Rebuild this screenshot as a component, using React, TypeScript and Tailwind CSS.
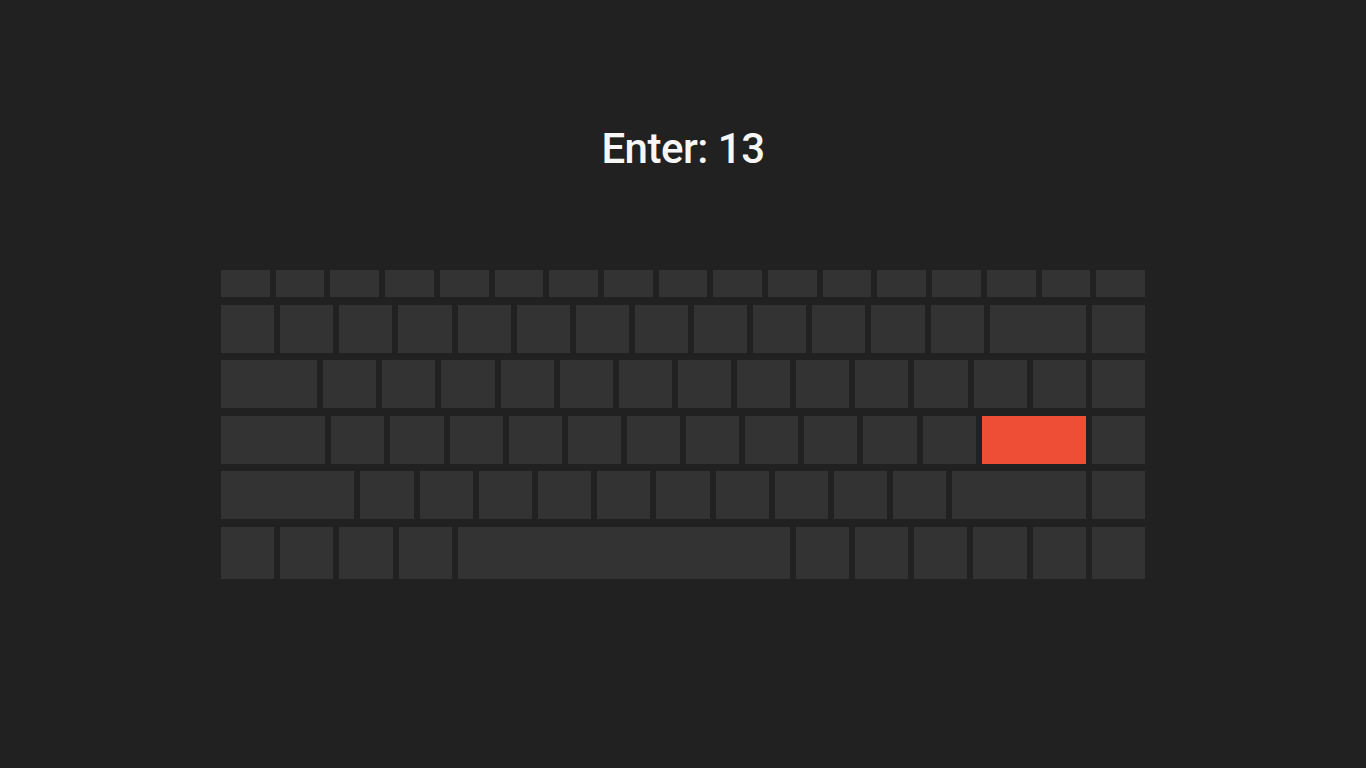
import React from "react";

type K = { g: string; hl?: boolean };

const n = (count: number): K[] => Array.from({ length: count }, () => ({ g: "grow-[53]" }));

const rows: { h: string; keys: K[] }[] = [
  { h: "h-[27px]", keys: Array.from({ length: 17 }, () => ({ g: "grow" })) },
  { h: "h-[48px]", keys: [...n(13), { g: "grow-[96]" }, ...n(1)] },
  { h: "h-[48px]", keys: [{ g: "grow-[96]" }, ...n(14)] },
  { h: "h-[48px]", keys: [{ g: "grow-[104]" }, ...n(11), { g: "grow-[104]", hl: true }, ...n(1)] },
  { h: "h-[48px]", keys: [{ g: "grow-[133]" }, ...n(10), { g: "grow-[133]" }, ...n(1)] },
  { h: "h-[52px]", keys: [...n(4), { g: "grow-[331]" }, ...n(6)] },
];

export default function App() {
  return (
    <div className="min-h-screen w-full bg-[#212121] flex flex-col items-center" style={{ fontFamily: "Roboto, 'Noto Sans', sans-serif" }}>
      <h1 className="mt-[128px] text-[42px] leading-none font-medium text-[#f7f7f7] tracking-[-0.5px]">Enter: 13</h1>
      <div className="mt-[100px] w-[924px] flex flex-col gap-[7.5px]">
        {rows.map((r, i) => (
          <div key={i} className={`flex gap-[6px] ${r.h}`}>
            {r.keys.map((k, j) => (
              <div key={j} className={`${k.g} basis-0 ${k.hl ? "bg-[#ee4e36]" : "bg-[#333333]"}`} />
            ))}
          </div>
        ))}
      </div>
    </div>
  );
}
